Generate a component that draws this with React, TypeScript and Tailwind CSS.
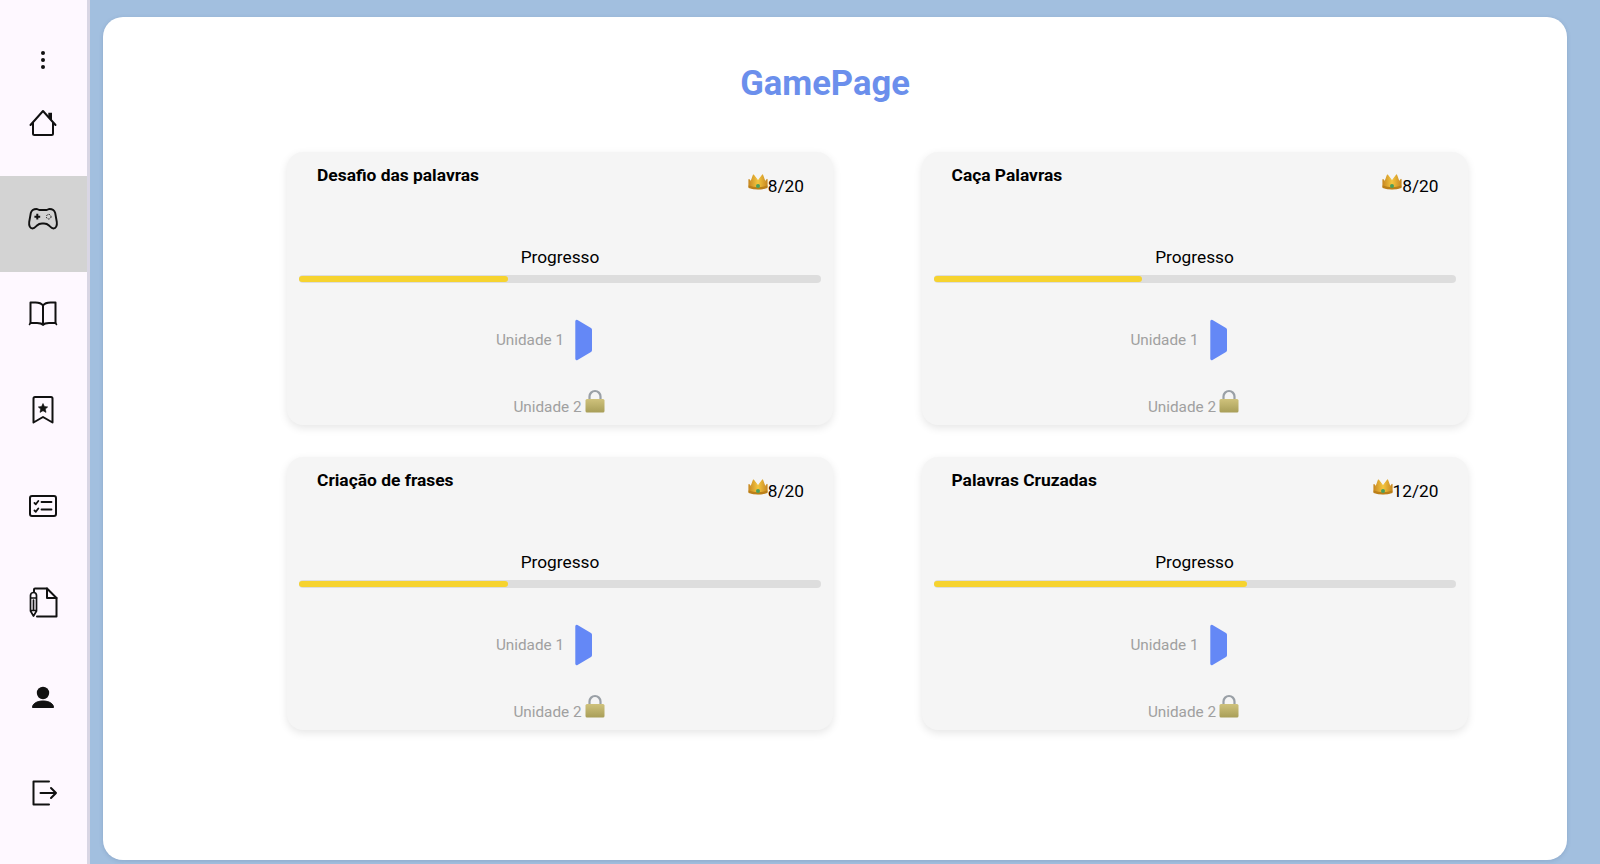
import React from "react";

const s = { fill: "none", stroke: "#111", strokeWidth: 2, strokeLinecap: "round" as const, strokeLinejoin: "round" as const };

function Dots() {
  return (
    <svg width="32" height="32" viewBox="0 0 32 32">
      <circle cx="16" cy="9" r="2" fill="#111" />
      <circle cx="16" cy="16" r="2" fill="#111" />
      <circle cx="16" cy="23" r="2" fill="#111" />
    </svg>
  );
}
function Home() {
  return (
    <svg width="32" height="32" viewBox="0 0 32 32">
      <path d="M3.500 19 16 5 28.500 19" {...s} />
      <path d="M6 17V27.500a1.500 1.500 0 0 0 1.500 1.500H24.500a1.500 1.500 0 0 0 1.500-1.500V17" {...s} />
      <path d="M21.300 6.700H25V15L21.300 10.500z" fill="#111" />
    </svg>
  );
}
function Game() {
  return (
    <svg width="32" height="32" viewBox="0 0 32 32">
      <path d="M9.500 7c1.200 0 2 1 3 1h7c1 0 1.800-1 3-1 3 0 5 1.500 5.700 4l1.600 9c.5 3.600-.9 6.500-3.300 6.500-1.900 0-3-1.500-4.500-3-1.300-1.300-2.900-2-5-2h-2c-2.100 0-3.700.7-5 2-1.500 1.500-2.600 3-4.500 3-2.400 0-3.800-2.900-3.300-6.500l1.600-9C4.500 8.500 6.500 7 9.500 7z" {...s} strokeWidth={1.9} />
      <path d="M10.300 11.800v5.800M7.400 14.700h5.800" {...s} strokeWidth={2} strokeLinecap="butt" />
      <circle cx="21.700" cy="14.700" r="2.300" fill="none" stroke="#111" strokeWidth="1" strokeDasharray="1.400 1" />
    </svg>
  );
}
function Book() {
  return (
    <svg width="32" height="32" viewBox="0 0 32 32">
      <path d="M16 7.500C14.500 5.400 12 4.500 8.500 4.500H3.500V25H10c2.500 0 4.800.4 6 2 1.200-1.600 3.500-2 6-2h6.500V4.500H23.500C20 4.500 17.500 5.400 16 7.500zM16 7.500V26" {...s} />
      <path d="M2.500 26.500 3.500 25M29.500 26.500 28.500 25" {...s} strokeWidth={1.600} />
    </svg>
  );
}
function Mark() {
  return (
    <svg width="32" height="32" viewBox="0 0 32 32">
      <path d="M6.500 4.500A1.500 1.500 0 0 1 8 3h16a1.500 1.500 0 0 1 1.500 1.500V28.500L16 23l-9.500 5.500z" {...s} />
      <path d="m16 9.500 1.400 3 3.300.4-2.400 2.200.7 3.300-3-1.700-3 1.700.7-3.300-2.400-2.200 3.300-.4z" fill="#111" stroke="#111" strokeWidth="0.600" strokeLinejoin="round" />
    </svg>
  );
}
function Checks() {
  return (
    <svg width="32" height="32" viewBox="0 0 32 32">
      <rect x="3" y="6" width="26" height="20" rx="2" {...s} />
      <path d="M14.500 12h10M14.500 19.500h10" {...s} strokeWidth={1.800} />
      <path d="m7.500 13 1.300 1.300 2.500-3.300M7.500 20.500l1.300 1.300 2.500-3.300" {...s} strokeWidth={1.800} />
    </svg>
  );
}
function Doc() {
  return (
    <svg width="32" height="32" viewBox="0 0 32 32">
      <path d="M7 5.500V3.500a1 1 0 0 1 1-1h12l9.500 9.500v18.500H10" {...s} />
      <path d="M20 2.500v9.500h9.500" {...s} />
      <path d="M3.500 9.500a3 3 0 0 1 3-3 3 3 0 0 1 3 3v15.500l-3 5-3-5zM3.500 12h6M3.500 24.500h6M6.500 14v10" {...s} strokeWidth={1.700} />
    </svg>
  );
}
function Person() {
  return (
    <svg width="32" height="32" viewBox="0 0 32 32">
      <circle cx="16" cy="11" r="6.200" fill="#111" />
      <path d="M5.500 25.500c0-4 4.500-6.500 10.500-6.500s10.500 2.500 10.500 6.500z" fill="#111" strokeLinejoin="round" stroke="#111" />
    </svg>
  );
}
function Logout() {
  return (
    <svg width="32" height="32" viewBox="0 0 32 32">
      <path d="M22 3.500H6.500v23H22" {...s} />
      <path d="M13.500 15H29M24 10l5 5-5 5" {...s} />
    </svg>
  );
}

function Crown() {
  return (
    <svg width="20" height="17" viewBox="0 0 20 17" className="shrink-0">
      <defs>
        <linearGradient id="cg" x1="0" y1="0" x2="1" y2="0">
          <stop offset="0" stopColor="#c98a22" />
          <stop offset="0.5" stopColor="#f4c63f" />
          <stop offset="1" stopColor="#c98a22" />
        </linearGradient>
      </defs>
      <path d="M1 14V6.500L3 9 5.500 2 10 8 14.500 2 17 9 19 6.500V14Q10 17.500 1 14z" fill="url(#cg)" stroke="url(#cg)" strokeWidth="1.200" strokeLinejoin="round" />
      <path d="M.6 12.500Q10 16 19.400 12.500V15Q10 18 .6 15z" fill="#bb7f18" />
      <circle cx="10" cy="13" r="2" fill="#4a9e5c" />
    </svg>
  );
}
function Lock() {
  return (
    <svg width="20" height="24" viewBox="0 0 20 24" className="shrink-0">
      <defs>
        <linearGradient id="lg" x1="0" y1="0" x2="0" y2="1">
          <stop offset="0" stopColor="#cfc27c" />
          <stop offset="1" stopColor="#a89e58" />
        </linearGradient>
      </defs>
      <path d="M4.500 11V7.500a5.500 5.500 0 0 1 11 0V11" fill="none" stroke="#9aa0a6" strokeWidth="2.200" />
      <rect x="0.500" y="10" width="19" height="13.500" rx="1.500" fill="url(#lg)" />
    </svg>
  );
}

const cards = [
  { title: "Desafio das palavras", score: "8/20", pct: 40 },
  { title: "Caça Palavras", score: "8/20", pct: 40 },
  { title: "Criação de frases", score: "8/20", pct: 40 },
  { title: "Palavras Cruzadas", score: "12/20", pct: 60 },
];

function Card({ title, score, pct }: { title: string; score: string; pct: number }) {
  return (
    <div className="h-[273px] rounded-2xl bg-[#f5f5f5] shadow-[0_3px_8px_rgba(0,0,0,0.1)] px-3 flex flex-col">
      <div className="flex justify-between pl-[18px] pr-[17px] h-[93px]">
        <div className="pt-[11px] text-[17.400px] leading-[24px] font-bold text-black">{title}</div>
        <div className="pt-[21px] flex items-start">
          <Crown />
          <span className="text-[17.300px] leading-[24px] text-black mt-[1px]">{score}</span>
        </div>
      </div>
      <div className="text-center text-[17.300px] leading-[24px] text-black">Progresso</div>
      <div className="mt-[6px] h-[8px] rounded-full bg-[#dddddd] py-[1px]">
        <div className="h-full rounded-full bg-[#f6d32f]" style={{ width: `${pct}%` }} />
      </div>
      <div className="mt-[35px] flex items-center justify-center gap-[11px] h-[44px] pr-[31px]">
        <span className="text-[15.300px] leading-[24px] text-[#a0a0a0]">Unidade 1</span>
        <svg width="18" height="42" viewBox="0 0 18 42">
          <path d="M2.500 1 16 9a2 2 0 0 1 1 1.700V31.300a2 2 0 0 1-1 1.700L2.500 41a1.500 1.500 0 0 1-2.200-1.300V2.300A1.500 1.500 0 0 1 2.500 1z" fill="#6488f6" />
        </svg>
      </div>
      <div className="mt-[27px] flex items-end justify-center pr-[2px]">
        <span className="text-[15.300px] leading-[24px] text-[#a0a0a0] mr-[3px]">Unidade 2</span>
        <span className="mb-[6px]"><Lock /></span>
      </div>
    </div>
  );
}

export default function App() {
  const items = [Home, Game, Book, Mark, Checks, Doc, Person, Logout];
  return (
    <div className="flex h-[864px] w-[1600px] overflow-hidden bg-[#a2bfdf] font-['Roboto',sans-serif]">
      <aside className="w-[90px] shrink-0 bg-[#fef8ff] border-r-[3px] border-[#d9d6e4]">
        <div className="h-[80px] flex items-center justify-center pt-[40px] pr-[1px]">
          <Dots />
        </div>
        {items.map((Icon, i) => (
          <div key={i} className={`h-[96px] flex items-center justify-center pb-[12px] pr-[1px] ${i === 1 ? "bg-[#d3d3d3]" : ""}`}>
            <Icon />
          </div>
        ))}
      </aside>
      <main className="flex-1 pl-[13px] pr-[33px] pt-[17px] pb-[4px]">
        <div className="h-full rounded-[20px] bg-white shadow-[0_1px_4px_rgba(60,80,120,0.2)] pt-[43px]">
          <h1 className="text-center text-[34.600px] leading-[46px] font-bold text-[#6b8fec] pr-[20px]">GamePage</h1>
          <div className="mt-[46px] ml-[184px] mr-[99.500px] grid grid-cols-2 gap-x-[88.500px] gap-y-[31.500px]">
            {cards.map((c) => (
              <Card key={c.title} {...c} />
            ))}
          </div>
        </div>
      </main>
    </div>
  );
}
